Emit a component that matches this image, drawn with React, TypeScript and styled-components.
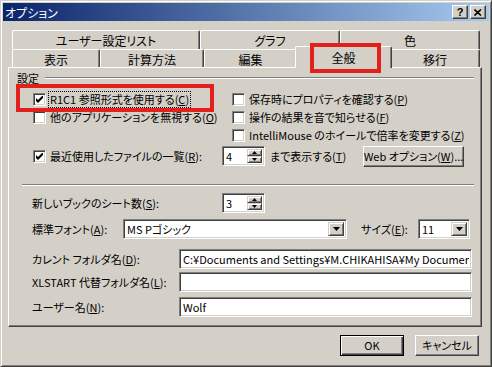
import styled, { createGlobalStyle, css } from "styled-components";

const face = "#d4d0c8";
const shadow = "#808080";
const dark = "#404040";

const GlobalStyle = createGlobalStyle`
  html, body {
    margin: 0;
    padding: 0;
    background: ${face};
  }
  body {
    font-family: "Noto Sans CJK JP", "Liberation Sans", sans-serif;
    font-size: 11px;
  }
`;

const Window = styled.div`
  position: relative;
  width: 492px;
  height: 367px;
  box-sizing: border-box;
  display: flex;
  flex-direction: column;
  background: ${face};
  border-top: 1px solid ${face};
  border-left: 1px solid ${face};
  border-right: 1px solid ${dark};
  border-bottom: 1px solid ${dark};
  box-shadow: inset 1px 1px #fff, inset -1px -1px ${shadow};
  padding: 2px;
  color: #000;
  font-size: 11px;
  line-height: 13px;
  font-feature-settings: "palt";
`;

const TitleBar = styled.div`
  height: 18px;
  display: flex;
  align-items: center;
  padding: 0 3px 0 2px;
  background: linear-gradient(to right, #0a246a, #a6caf0);
  color: #fff;
  font-size: 12px;
`;

const CaptionGroup = styled.div`
  margin-left: auto;
  display: flex;
  gap: 2px;
`;

const CaptionButton = styled.div`
  width: 16px;
  height: 14px;
  box-sizing: border-box;
  display: flex;
  align-items: center;
  justify-content: center;
  background: ${face};
  color: #000;
  font-family: "Liberation Sans", sans-serif;
  font-weight: bold;
  font-size: 11px;
  border-top: 1px solid #fff;
  border-left: 1px solid #fff;
  border-right: 1px solid ${dark};
  border-bottom: 1px solid ${dark};
  box-shadow: inset -1px -1px ${shadow};
`;

const Content = styled.div`
  display: flex;
  flex-direction: column;
  padding: 9px 7px 0 5px;
`;

const TabStrip = styled.div`
  display: flex;
  flex-direction: column;
  padding-left: 4px;
  font-size: 12px;
`;

const TabRow = styled.div<{ $h: number }>`
  display: flex;
  height: ${(p) => p.$h}px;
`;

const Tab = styled.div<{ $w: number; $active?: boolean }>`
  flex-shrink: 0;
  box-sizing: border-box;
  width: ${(p) => p.$w}px;
  height: 100%;
  display: flex;
  align-items: center;
  justify-content: center;
  padding-top: 1px;
  background: ${face};
  border-top: 1px solid #fff;
  border-left: 1px solid #fff;
  border-right: 1px solid ${dark};
  box-shadow: inset -1px 0 ${shadow};
  border-radius: 2px 2px 0 0;
  ${(p) =>
    p.$active &&
    css`
      position: relative;
      z-index: 2;
      width: ${p.$w + 4}px;
      height: calc(100% + 4px);
      margin: -3px -2px -1px;
      padding-bottom: 1px;
    `}
`;

const Panel = styled.div`
  position: relative;
  z-index: 1;
  height: 260px;
  box-sizing: border-box;
  display: flex;
  flex-direction: column;
  border-top: 1px solid #fff;
  border-left: 1px solid #fff;
  border-right: 1px solid ${dark};
  border-bottom: 1px solid ${dark};
  box-shadow: inset -1px -1px ${shadow};
  padding-top: 3px;
`;

const GroupHeader = styled.div`
  display: flex;
  align-items: center;
  gap: 6px;
  height: 14px;
  margin: 0 7px 0 8px;
`;

const Etched = styled.div`
  flex: 1;
  height: 0;
  border-top: 1px solid ${shadow};
  border-bottom: 1px solid #fff;
`;

const Separator = styled.div<{ $top: number }>`
  height: 0;
  margin: ${(p) => p.$top}px 7px 0 13px;
  border-top: 1px solid ${shadow};
  border-bottom: 1px solid #fff;
`;

const CheckColumns = styled.div`
  display: flex;
  margin: 5px 0 0 24px;
`;

const CheckColumn = styled.div<{ $w?: number }>`
  display: flex;
  flex-direction: column;
  ${(p) => (p.$w ? `width: ${p.$w}px;` : "flex: 1;")}
`;

const CheckRow = styled.div`
  display: flex;
  align-items: center;
  gap: 4px;
  height: 18px;
  white-space: nowrap;
`;

const Box = styled.div`
  width: 13px;
  height: 13px;
  box-sizing: border-box;
  flex-shrink: 0;
  display: flex;
  align-items: center;
  justify-content: center;
  background: #fff;
  border-top: 1px solid ${shadow};
  border-left: 1px solid ${shadow};
  border-right: 1px solid #fff;
  border-bottom: 1px solid #fff;
  box-shadow: inset 1px 1px ${dark}, inset -1px -1px ${face};
`;

const Focus = styled.span`
  outline: 1px dotted #000;
  outline-offset: 1px;
`;

const U = styled.span`
  text-decoration: underline;
`;

const FormRow = styled.div<{ $top: number; $left?: number }>`
  display: flex;
  align-items: center;
  height: 20px;
  margin: ${(p) => p.$top}px 0 0 ${(p) => p.$left ?? 23}px;
  white-space: nowrap;
`;

const LabelCell = styled.div<{ $w: number; $pad?: number }>`
  flex-shrink: 0;
  box-sizing: border-box;
  width: ${(p) => p.$w}px;
  padding-left: ${(p) => p.$pad ?? 0}px;
  white-space: nowrap;
`;

const Sunken = styled.div<{ $w: number }>`
  flex-shrink: 0;
  width: ${(p) => p.$w}px;
  height: 20px;
  box-sizing: border-box;
  display: flex;
  align-items: stretch;
  background: #fff;
  border-top: 1px solid ${shadow};
  border-left: 1px solid ${shadow};
  border-right: 1px solid #fff;
  border-bottom: 1px solid #fff;
  box-shadow: inset 1px 1px ${dark}, inset -1px -1px ${face};
  padding: 2px;
  overflow: hidden;
`;

const FieldText = styled.div`
  flex: 1;
  min-width: 0;
  display: flex;
  align-items: center;
  padding-left: 1px;
  line-height: 14px;
  white-space: nowrap;
  overflow-x: clip;
  overflow-y: visible;
`;

const SpinColumn = styled.div`
  width: 15px;
  display: flex;
  flex-direction: column;
`;

const Raised = styled.div`
  box-sizing: border-box;
  display: flex;
  align-items: center;
  justify-content: center;
  background: ${face};
  border-top: 1px solid ${face};
  border-left: 1px solid ${face};
  border-right: 1px solid ${dark};
  border-bottom: 1px solid ${dark};
  box-shadow: inset 1px 1px #fff, inset -1px -1px ${shadow};
`;

const SpinButton = styled(Raised)`
  flex: 1;
`;

const DropButton = styled(Raised)`
  width: 16px;
  flex-shrink: 0;
`;

const PushButton = styled.div<{ $w: number; $default?: boolean }>`
  flex-shrink: 0;
  width: ${(p) => p.$w}px;
  height: 21px;
  box-sizing: border-box;
  display: flex;
  align-items: center;
  justify-content: center;
  background: ${face};
  white-space: nowrap;
  ${(p) =>
    p.$default
      ? css`
          border: 1px solid #000;
          box-shadow: inset 1px 1px #fff, inset -1px -1px ${dark},
            inset -2px -2px ${shadow};
        `
      : css`
          border-top: 1px solid #fff;
          border-left: 1px solid #fff;
          border-right: 1px solid ${dark};
          border-bottom: 1px solid ${dark};
          box-shadow: inset -1px -1px ${shadow};
        `}
`;

const Footer = styled.div`
  display: flex;
  justify-content: flex-end;
  gap: 11px;
  margin-top: 8px;
  padding-right: 3px;
`;

const Mark = styled.div<{ $x: number; $y: number; $w: number; $h: number }>`
  position: absolute;
  left: ${(p) => p.$x}px;
  top: ${(p) => p.$y}px;
  width: ${(p) => p.$w}px;
  height: ${(p) => p.$h}px;
  box-sizing: border-box;
  border: 4px solid #e3211c;
  z-index: 5;
`;

const Check = ({ on }: { on?: boolean }) => (
  <Box>
    {on && (
      <svg width="7" height="7" viewBox="0 0 7 7">
        <path d="M0 2 L2 4 L7 -1 L7 2 L2 7 L0 5 Z" fill="#000" />
      </svg>
    )}
  </Box>
);

const Arrow = ({ up, w = 5 }: { up?: boolean; w?: number }) => {
  const h = Math.ceil(w / 2);
  return (
    <svg width={w} height={h} viewBox={`0 0 ${w} ${h}`}>
      <path
        d={up ? `M0 ${h} L${w / 2} 0 L${w} ${h} Z` : `M0 0 L${w} 0 L${w / 2} ${h} Z`}
        fill="#000"
      />
    </svg>
  );
};

const Spinner = ({ value }: { value: string }) => (
  <Sunken $w={43}>
    <FieldText>{value}</FieldText>
    <SpinColumn>
      <SpinButton>
        <Arrow up />
      </SpinButton>
      <SpinButton>
        <Arrow />
      </SpinButton>
    </SpinColumn>
  </Sunken>
);

const Combo = ({ value, w }: { value: string; w: number }) => (
  <Sunken $w={w}>
    <FieldText>{value}</FieldText>
    <DropButton>
      <Arrow w={7} />
    </DropButton>
  </Sunken>
);

const App = () => {
  return (
    <Window>
      <GlobalStyle />
      <TitleBar>
        <span>オプション</span>
        <CaptionGroup>
          <CaptionButton>?</CaptionButton>
          <CaptionButton>
            <svg width="8" height="7" viewBox="0 0 8 7">
              <path d="M0.5 0.5 L7 6.5 M7 0.5 L0.5 6.5" stroke="#000" strokeWidth="1.6" />
            </svg>
          </CaptionButton>
        </CaptionGroup>
      </TitleBar>

      <Content>
        <TabStrip>
          <TabRow $h={19}>
            <Tab $w={188}>ユーザー設定リスト</Tab>
            <Tab $w={140}>グラフ</Tab>
            <Tab $w={140}>色</Tab>
          </TabRow>
          <TabRow $h={18}>
            <Tab $w={88}>表示</Tab>
            <Tab $w={104}>計算方法</Tab>
            <Tab $w={93}>編集</Tab>
            <Tab $w={93} $active>
              全般
            </Tab>
            <Tab $w={90}>移行</Tab>
          </TabRow>
        </TabStrip>

        <Panel>
          <GroupHeader>
            <span>設定</span>
            <Etched />
          </GroupHeader>

          <CheckColumns>
            <CheckColumn $w={199}>
              <CheckRow>
                <Check on />
                <Focus>
                  R1C1 参照形式を使用する(<U>C</U>)
                </Focus>
              </CheckRow>
              <CheckRow>
                <Check />
                <span>
                  他のアプリケーションを無視する(<U>O</U>)
                </span>
              </CheckRow>
            </CheckColumn>
            <CheckColumn>
              <CheckRow>
                <Check />
                <span>
                  保存時にプロパティを確認する(<U>P</U>)
                </span>
              </CheckRow>
              <CheckRow>
                <Check />
                <span>
                  操作の結果を音で知らせる(<U>F</U>)
                </span>
              </CheckRow>
              <CheckRow>
                <Check />
                <span>
                  IntelliMouse のホイールで倍率を変更する(<U>Z</U>)
                </span>
              </CheckRow>
            </CheckColumn>
          </CheckColumns>

          <FormRow $top={2} $left={24}>
            <LabelCell $w={189}>
              <CheckRow>
                <Check on />
                <span>
                  最近使用したファイルの一覧(<U>R</U>):
                </span>
              </CheckRow>
            </LabelCell>
            <Spinner value="4" />
            <LabelCell $w={98} $pad={5}>
              まで表示する(<U>T</U>)
            </LabelCell>
            <PushButton $w={101}>
              <span>
                Web オプション(<U>W</U>)...
              </span>
            </PushButton>
          </FormRow>

          <Separator $top={18} />

          <FormRow $top={7}>
            <LabelCell $w={190}>
              新しいブックのシート数(<U>S</U>):
            </LabelCell>
            <Spinner value="3" />
          </FormRow>

          <FormRow $top={6}>
            <LabelCell $w={91}>
              標準フォント(<U>A</U>):
            </LabelCell>
            <Combo value="MS Pゴシック" w={224} />
            <LabelCell $w={71} $pad={14}>
              サイズ(<U>E</U>):
            </LabelCell>
            <Combo value="11" w={52} />
          </FormRow>

          <FormRow $top={10}>
            <LabelCell $w={147}>
              カレント フォルダ名(<U>D</U>):
            </LabelCell>
            <Sunken $w={293}>
              <FieldText>C:¥Documents and Settings¥M.CHIKAHISA¥My Documents</FieldText>
            </Sunken>
          </FormRow>

          <FormRow $top={3}>
            <LabelCell $w={147}>
              XLSTART 代替フォルダ名(<U>L</U>):
            </LabelCell>
            <Sunken $w={293}>
              <FieldText />
            </Sunken>
          </FormRow>

          <FormRow $top={5}>
            <LabelCell $w={147}>
              ユーザー名(<U>N</U>):
            </LabelCell>
            <Sunken $w={293}>
              <FieldText>Wolf</FieldText>
            </Sunken>
          </FormRow>
        </Panel>

        <Footer>
          <PushButton $w={64} $default>
            OK
          </PushButton>
          <PushButton $w={64}>キャンセル</PushButton>
        </Footer>
      </Content>

      <Mark $x={309} $y={42} $w={71} $h={30} />
      <Mark $x={15} $y={83} $w={198} $h={28} />
    </Window>
  );
};

export default App;
